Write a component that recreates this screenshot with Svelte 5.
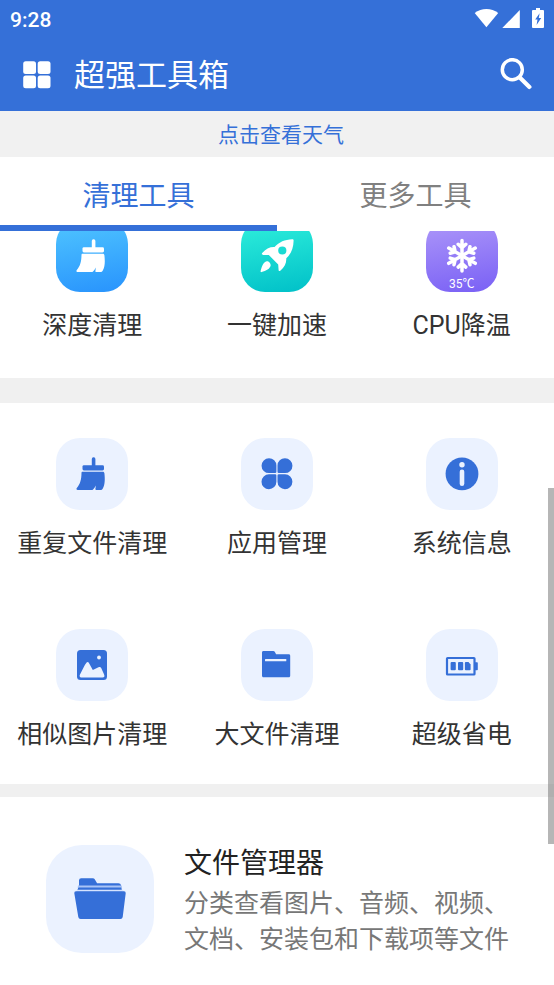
<script>
  let tab = $state('clean');

  const quick = [
    { icon: 'brush', tone: 'sky', label: '深度清理' },
    { icon: 'rocket', tone: 'teal', label: '一键加速' },
    { icon: 'snow', tone: 'violet', label: 'CPU降温', badge: '35℃' }
  ];

  const tools = [
    { icon: 'brush', label: '重复文件清理' },
    { icon: 'clover', label: '应用管理' },
    { icon: 'info', label: '系统信息' },
    { icon: 'photo', label: '相似图片清理' },
    { icon: 'folder', label: '大文件清理' },
    { icon: 'battery', label: '超级省电' }
  ];
</script>

{#snippet glyph(name)}
  <svg viewBox="0 0 72 72" aria-hidden="true" fill="currentColor">
    {#if name === 'brush'}
      <rect x="35.8" y="19.3" width="3.6" height="10" rx="1.6" />
      <rect x="26.5" y="27.2" width="21.5" height="5.2" rx="1.4" />
      <path d="M26.6 33.700h20.2c1 0 1.500.6 1.600 1.500.6 5.200.8 11.300-1.600 15.300-.6 1-1.300 1.500-2.500 1.500h-4.100c-.8 0-.9-.5-.8-1.200l.5-3.200c-1 1.600-1.700 2.800-2.800 3.800-.5.5-1 .6-1.800.6H21.800c-1.300 0-1.800-.9-1-1.900 3.500-4.500 4.600-8.700 4.700-15.200 0-.8.3-1.200 1.100-1.200z" />
    {:else if name === 'rocket'}
      <path fill-rule="evenodd" d="M51.2 19.200c.9-.1 1.500.4 1.400 1.500-.1 7.200-2.300 12.900-7.300 17.600.2 4.800-1.600 8.600-6 12.400-.9.8-1.700.4-1.700-.7l-.4-5.400-9.400-9.500-5.800-.2c-1.200 0-1.500-.9-.8-1.800 3.500-4.400 7.700-6.300 12.300-6.100 4.800-5.200 10.200-7.400 17.700-7.800zM41.300 26.400a4.100 4.100 0 1 0 0 8.200 4.100 4.100 0 0 0 0-8.200z" />
      <path d="M25.700 41.200c1.700-.4 4.200 2 4 4.100-.4 3.400-4.800 5.800-9.100 6.800-.7.2-1.200-.3-1-1 1.100-4.500 2.700-9.200 6.100-9.900z" />
    {:else if name === 'snow'}
      <g fill="none" stroke="currentColor" stroke-width="3.500" stroke-linecap="round" stroke-linejoin="round">
        {#each [0, 60, 120, 180, 240, 300] as turn}
          <path transform="rotate({turn} 36 35.700)" d="M36 35.700V20.400M32.200 24.300l3.800 3.500 3.800-3.500" />
        {/each}
      </g>
    {:else if name === 'clover'}
      <path d="M28 20.200a7.400 7.400 0 0 1 7.400 7.400v6.200a1.300 1.300 0 0 1-1.300 1.300H28a7.450 7.450 0 0 1 0-14.900zM44 20.200a7.450 7.450 0 0 1 0 14.900h-6.200a1.300 1.300 0 0 1-1.300-1.300v-6.200a7.400 7.400 0 0 1 7.500-7.400zM28 36.300h6.100a1.300 1.300 0 0 1 1.300 1.300v6.200A7.450 7.450 0 1 1 28 36.300zM37.800 36.300H44a7.450 7.450 0 1 1-7.500 7.500v-6.200a1.300 1.300 0 0 1 1.300-1.300z" />
    {:else if name === 'info'}
      <circle cx="36" cy="35.900" r="16.400" />
      <circle cx="36" cy="26.700" r="2.700" fill="#ebf2ff" />
      <rect x="33.700" y="31.400" width="4.600" height="16.600" rx="2.300" fill="#ebf2ff" />
    {:else if name === 'photo'}
      <rect x="21" y="21" width="30" height="30" rx="3.500" />
      <circle cx="43" cy="28.500" r="1.900" fill="#ebf2ff" />
      <path fill="#ebf2ff" d="M24 45.500c2-3.500 4.300-9 6.600-11.900.7-.9 1.600-.9 2.200.1l4 7.400 5.700-2.900c1.300-.6 2.100-.3 2.700.8l2.700 6c1 2.300.7 3.600-1.500 3.600H26.200c-2.300 0-3.200-1.100-2.200-3.100z" />
    {:else if name === 'folder'}
      <path d="M22.500 22h9.700c.8 0 1.300.3 1.700 1l1.200 2.300h12.600c1 0 1.500.6 1.500 1.500v20c0 .9-.5 1.500-1.500 1.500H22.500c-1 0-1.500-.6-1.500-1.500V23.500c0-.9.500-1.500 1.500-1.500z" />
      <rect x="24" y="30" width="21.300" height="2.300" rx=".5" fill="#ebf2ff" />
    {:else if name === 'battery'}
      <rect x="21" y="29" width="27.500" height="16.500" rx=".6" fill="none" stroke="currentColor" stroke-width="2.200" />
      <rect x="48.500" y="33.200" width="3.300" height="8" rx=".8" />
      <rect x="24.600" y="33" width="5.200" height="8.300" rx="1" />
      <rect x="32" y="33" width="5.200" height="8.300" rx="1" />
      <path d="M39.900 33h2.600l2.100 2.500v4.800a1 1 0 0 1-1 1h-3.700a1 1 0 0 1-1-1V34a1 1 0 0 1 1-1z" />
    {/if}
  </svg>
{/snippet}

{#snippet tile(item)}
  <button class="tool" type="button">
    <span class="tile {item.tone ?? 'pale'}">
      {@render glyph(item.icon)}
      {#if item.badge}<span class="badge">{item.badge}</span>{/if}
    </span>
    <span class="label">{item.label}</span>
  </button>
{/snippet}

<div class="screen">
  <header>
    <div class="status">
      <span class="time">9:28</span>
      <svg width="70" height="20" viewBox="0 0 70 20" fill="#fff" aria-hidden="true">
        <path d="M.7 4.900C7.500-.2 17.400-.2 24.200 4.900L12.400 19.200z" />
        <path d="M45.800 2v18H28.300z" />
        <path fill-rule="evenodd" d="M62 0h4v1.900h3q1 0 1 1V19q0 1-1 1H59q-1 0-1-1V2.900q0-1 1-1h3zM65.600 5.300l-4.400 6.300h2.300l-.9 5.400 4.600-6.900h-2.400z" />
      </svg>
    </div>
    <div class="bar">
      <button class="icon" type="button" aria-label="菜单">
        <svg width="28" height="28" viewBox="0 0 28 28" fill="#fff">
          <rect x=".2" y=".2" width="12.800" height="12.800" rx="2.500" />
          <rect x="14.700" y=".2" width="12.800" height="12.800" rx="2.500" />
          <rect x=".2" y="14.400" width="12.800" height="12.800" rx="2.500" />
          <rect x="14.700" y="14.400" width="12.800" height="12.800" rx="2.500" />
        </svg>
      </button>
      <h1>超强工具箱</h1>
      <button class="icon" type="button" aria-label="搜索">
        <svg width="32" height="34" viewBox="0 0 32 34" fill="none" stroke="#fff">
          <circle cx="12.300" cy="11.700" r="10" stroke-width="3.500" />
          <path d="M20.300 20 29.400 28.900" stroke-width="4.200" stroke-linecap="round" />
        </svg>
      </button>
    </div>
  </header>

  <a class="weather" href="#weather">点击查看天气</a>

  <div class="tabs" role="tablist">
    <button type="button" role="tab" aria-selected={tab === 'clean'} onclick={() => (tab = 'clean')}>清理工具</button>
    <button type="button" role="tab" aria-selected={tab === 'more'} onclick={() => (tab = 'more')}>更多工具</button>
  </div>

  <main>
    <div class="content">
      <section class="grid quick">
        {#each quick as item}{@render tile(item)}{/each}
      </section>
      <section class="grid tools">
        {#each tools as item}{@render tile(item)}{/each}
      </section>
      <section class="manager">
        <span class="cover">
          <svg viewBox="0 0 108 108" aria-hidden="true">
            <path fill="#356fd8" d="M35.200 33.300h11.500q1.500 0 2.200 1.200l2.200 3.800h21.400q2 0 2.600 2l.9 6H31l2-6V35.500q0-2.200 2.200-2.200z" />
            <path fill="#a9c4f6" d="M32.200 40.500h42.900l.7 2H31.500z" />
            <path fill="#d5e3ff" d="M31 44.800h46l.8 1.700H30.300z" />
            <path fill="#356fd8" d="M30 46.300h48q1.900 0 1.700 1.900l-3 23.700q-.3 2.100-2.300 2.100H34.600q-2 0-2.300-2.100l-4-23.700q-.2-1.900 1.700-1.900z" />
          </svg>
        </span>
        <div class="about">
          <h2>文件管理器</h2>
          <p>分类查看图片、音频、视频、文档、安装包和下载项等文件</p>
        </div>
      </section>
    </div>
  </main>
  <div class="thumb"></div>
</div>

<style>
  :global(body) {
    margin: 0;
    background: #fff;
  }
  .screen {
    position: relative;
    display: flex;
    flex-direction: column;
    height: 100vh;
    overflow: hidden;
    font-family: Roboto, 'Noto Sans CJK SC', sans-serif;
    font-weight: 400;
    color: #333;
    background: #fff;
  }
  button {
    margin: 0;
    padding: 0;
    border: 0;
    background: none;
    font: inherit;
    color: inherit;
    cursor: pointer;
  }
  svg {
    display: block;
  }
  header {
    flex: none;
    color: #fff;
    background: #3570d8;
  }
  .status {
    display: flex;
    justify-content: space-between;
    align-items: center;
    height: 38px;
    padding: 0 10px;
  }
  .status svg {
    margin-bottom: 2px;
  }
  .time {
    padding-top: 2px;
    font-size: 21px;
    font-weight: 500;
  }
  .bar {
    display: flex;
    align-items: center;
    height: 73px;
    padding: 0 22px 0 23px;
  }
  h1 {
    flex: 1;
    margin: 0 0 0 23px;
    padding-top: 2px;
    font-size: 31px;
    font-weight: 400;
    line-height: 40px;
  }
  .weather {
    flex: none;
    padding: 2px 0 0 8px;
    font-size: 21px;
    line-height: 44px;
    text-align: center;
    text-decoration: none;
    color: #3570d8;
    background: #f1f1f1;
  }
  .tabs {
    display: flex;
    flex: none;
  }
  .tabs button {
    flex: 1;
    height: 74px;
    border-bottom: 6px solid transparent;
    padding-top: 12px;
    font-size: 28px;
    line-height: 56px;
    color: #808080;
  }
  .tabs button[aria-selected='true'] {
    border-color: #3570d8;
    color: #3570d8;
  }
  main {
    flex: 1;
    min-height: 0;
    overflow: hidden;
  }
  .content {
    margin-top: -46px;
  }
  .grid {
    display: grid;
    grid-template-columns: repeat(3, 1fr);
    row-gap: 1px;
  }
  .quick {
    padding-bottom: 3px;
    border-bottom: 25px solid #f0f0f0;
  }
  .tools {
    border-bottom: 13px solid #f0f0f0;
  }
  .tool {
    display: flex;
    flex-direction: column;
    align-items: center;
    gap: 16px;
    padding: 35px 0 31px;
  }
  .tile {
    position: relative;
    width: 72px;
    height: 72px;
    border-radius: 24px;
    color: #fff;
  }
  .pale {
    color: #356fd8;
    background: #ebf2ff;
  }
  .sky {
    background: linear-gradient(170deg, #50c6ff, #2893fd);
  }
  .teal {
    background: linear-gradient(170deg, #30f0dc, #00c0c8);
  }
  .violet {
    background: linear-gradient(170deg, #ae98f9, #7960f5);
  }
  .badge {
    position: absolute;
    inset: auto 0 1px;
    font-size: 12px;
    line-height: 14px;
    text-align: center;
  }
  .label {
    font-size: 25px;
    line-height: 36px;
    white-space: nowrap;
  }
  .manager {
    display: flex;
    align-items: flex-start;
    padding: 48px 30px 32px 46px;
  }
  .cover {
    flex: none;
    width: 108px;
    height: 108px;
    border-radius: 36px;
    background: #ebf2ff;
  }
  .about {
    flex: 1;
    margin-left: 30px;
    padding-top: 1px;
  }
  h2 {
    margin: 0;
    font-size: 28px;
    font-weight: 400;
    line-height: 36px;
    color: #222;
  }
  p {
    margin: 4px 0 0;
    font-size: 25px;
    line-height: 36px;
    color: #777;
  }
  .thumb {
    position: absolute;
    right: 0;
    top: 488px;
    width: 6px;
    height: 356px;
    background: rgba(110, 110, 110, 0.5);
  }
</style>
